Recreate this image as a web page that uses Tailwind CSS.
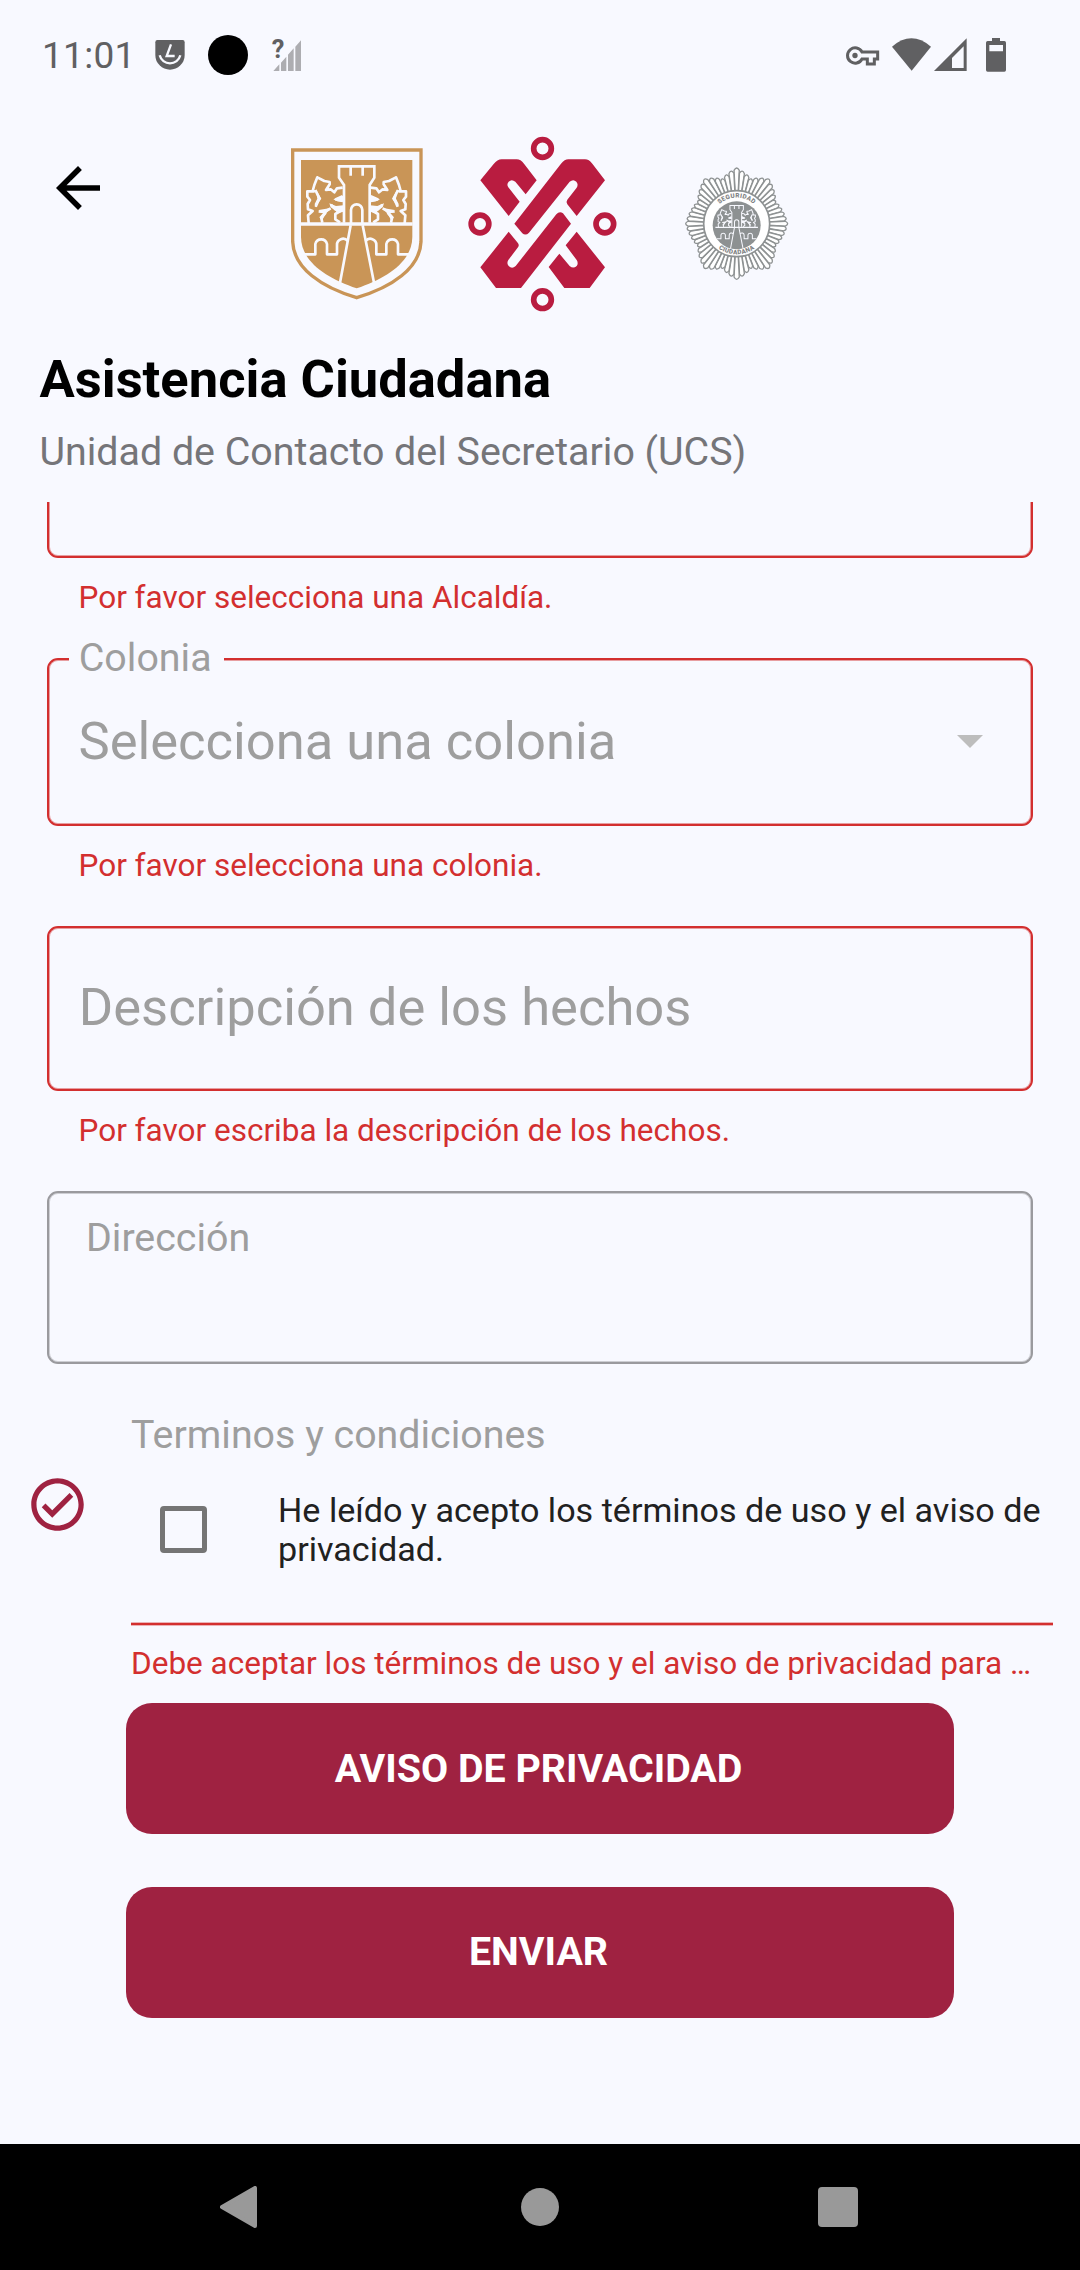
<!DOCTYPE html>
<html lang="es">
<head>
<meta charset="utf-8">
<title>Asistencia Ciudadana</title>
<script src="https://cdn.jsdelivr.net/npm/@tailwindcss/browser@4"></script>
</head>
<body class="w-[1080px] h-[2270px] overflow-hidden bg-[#f8f9ff] font-['Roboto',sans-serif] flex flex-col">

<!-- Status bar -->
<div class="h-[110px] flex shrink-0 items-start text-[#606062]">
  <div class="pl-[42px] pt-[31px] w-[155px] text-[37px] leading-[50px] tracking-[0.3px] whitespace-nowrap">11:01</div>
  <svg class="mt-[39px] w-8 h-8 shrink-0" viewBox="465 117 96 96">
    <path fill="currentColor" d="M472 120H548Q554 120 554 127V165A44 44 0 0 1 466 165V127Q466 120 472 120Z"/>
    <path fill="none" stroke="#f8f9ff" stroke-width="7" d="M513 133L500 168H524M479 166A32 32 0 0 0 541 166"/>
  </svg>
  <div class="ml-[21px] mt-[35px] size-10 rounded-full bg-black"></div>
  <svg class="ml-[14px] mt-[24px] w-[50px] h-[60px] shrink-0" viewBox="786 72 150 180">
    <path fill="#adadb1" d="M820 213L838 193V213ZM843 213V188L859 170V213ZM864 213V164L881 145V213ZM886 213V140L903 121V213Z"/>
    <text x="815" y="173" font-size="76" font-weight="700" fill="#606062" font-family="Roboto">?</text>
  </svg>
  <svg class="ml-auto mr-[60px] mt-[30px] w-[180px] h-[50px] text-[#606062]" viewBox="120 90 540 150">
    <g fill="none" stroke="currentColor" stroke-width="9">
      <path d="M186 156A23 23 0 1 0 186 177H202V192H223V177H233V156Z"/>
    </g>
    <g fill="currentColor">
      <circle cx="165" cy="166.500" r="8"/>
      <path d="M276 140Q334 90 393 140L335 212Z"/>
      <path fill-rule="evenodd" d="M402 213L500 115V213ZM456 174V204H491V139Z"/>
      <path fill-rule="evenodd" d="M576 114H600V123H613Q618 123 618 128V210Q618 215 613 215H563Q558 215 558 210V128Q558 123 563 123H576ZM568 135V154H609V135Z"/>
    </g>
  </svg>
</div>

<!-- Header with logos -->
<header class="h-[230px] flex shrink-0 items-start">
  <svg class="ml-[45px] mt-[45px] size-[66px] shrink-0" viewBox="0 0 24 24"><path d="M20 11H7.830l5.590-5.590L12 4l-8 8 8 8 1.410-1.410L7.830 13H20v-2z"/></svg>
  <svg class="ml-[169px] mt-5 w-[160px] h-[180px] shrink-0" viewBox="0 0 480 540">
    <path fill="none" stroke="#c99557" stroke-width="10" d="M38 60H423V335C420 415 335 472 230 503C125 472 41 415 38 335Z"/>
    <path fill="#c99557" d="M63 90H397V320C397 395 320 445 230 475C140 445 63 395 63 320Z"/>
    <g id="castle" fill="none" stroke="#f8f9ff" stroke-width="8">
      <path stroke-width="10" d="M62 282H398"/>
      <path d="M192 278V165L177 143V109H283V143L269 165V278M212 109V137M248 109V137M213 280V240A17 17 0 0 1 247 240V280M212 286L180 458M248 286L282 458"/>
      <g id="half" stroke-linejoin="round">
        <path d="M72 373H106V342A18 18 0 0 1 141 342V373H171V345A18 18 0 0 1 203 333"/>
        <path d="M98 183L103 165L112 142L133 153L149 156L149 163L138 180L152 178L163 187L171 175L188 173M104 184H82V200L90 210L83 222L84 238L98 243L84 256L86 279M106 180L118 205L107 230M188 199L168 208L188 213M188 240L166 238L153 224M186 240L166 252V268L180 277M152 235L133 246L116 244M137 248L124 264L127 278"/>
        <path stroke="none" fill="#f8f9ff" d="M108 178L124 206L106 232L104 222L112 206ZM148 220L168 228L190 226V245L172 250L165 240L152 232ZM160 208L190 197V216L172 214ZM116 240L152 234L135 254L126 272L118 262L130 248Z"/>
      </g>
      <use href="#half" transform="translate(460 0) scale(-1 1)"/>
    </g>
  </svg>
  <svg class="ml-5 mt-5 w-[165px] h-[185px] shrink-0" viewBox="0 0 495 555">
    <g fill="#b91c40">
      <path d="M61 151L101 102Q112 88 125 88H170Q182 88 192 101L230 151L197 193L166 155Q155 146 146 155Q139 163 145 172L179 215L146 258Z"/>
      <path d="M303 101Q314 88 325 88H375Q387 88 397 101L435 151L350 258L322 223Q317 216 322 209L350 173Q356 163 349 155Q340 146 329 155L207 308Q197 318 187 310L163 281Z"/>
      <path d="M333 281L183 474H108L61 412L146 305L173 338Q179 345 174 352L145 390Q139 400 146 408Q156 418 167 408L289 253Q298 243 309 250Z"/>
      <path d="M298 371L266 411L313 474H389L435 412L350 305L317 346L350 390Q356 400 350 408Q340 417 329 408Z"/>
    </g>
    <g fill="none" stroke="#b91c40" stroke-width="17">
      <circle cx="247.500" cy="55.500" r="26.500"/><circle cx="60" cy="282" r="26.500"/><circle cx="434.500" cy="282" r="26.500"/><circle cx="247.500" cy="509" r="26.500"/>
    </g>
  </svg>
  <svg class="ml-[50px] mt-[45px] w-[125px] h-[135px] shrink-0" viewBox="0 0 375 405">
    <g id="rays" fill="#fff" stroke="#8d9192" stroke-width="4" stroke-linejoin="round"></g>
    <circle cx="185" cy="206" r="99" fill="#fff" stroke="#8d9192" stroke-width="5"/>
    <circle cx="185" cy="211" r="72" fill="#8d9192"/>
    <clipPath id="disc"><circle cx="185" cy="211" r="72"/></clipPath>
    <g clip-path="url(#disc)"><use href="#castle" transform="translate(97.600 109.800) scale(.38)"/></g>
    <path id="arcTop" fill="none" d="M107 206A78 78 0 0 1 263 206"/>
    <path id="arcBottom" fill="none" d="M93 206A92 92 0 0 0 277 206"/>
    <g font-family="Roboto" font-weight="900" font-size="19" fill="#7f8384" text-anchor="middle">
      <text letter-spacing="1"><textPath href="#arcTop" startOffset="50%">SEGURIDAD</textPath></text>
      <text letter-spacing="1"><textPath href="#arcBottom" startOffset="50%">CIUDADANA</textPath></text>
    </g>
  </svg>
</header>

<h1 class="h-[78px] shrink-0 pl-[39.5px] text-[52.5px] leading-[78px] font-bold text-black whitespace-nowrap">Asistencia Ciudadana</h1>
<p class="h-[84px] shrink-0 pl-[39.5px] text-[39.375px] leading-[68px] text-[#757579] whitespace-nowrap">Unidad de Contacto del Secretario (UCS)</p>

<!-- Form -->
<main class="flex flex-col shrink-0 h-[1642px] overflow-hidden">
  <div class="mx-[47px] h-20 -mt-6 shrink-0 border-2 border-[#d32f2f] rounded-[11px] shadow-[inset_0_0_0_1px_rgba(211,47,47,0.45)]"></div>
  <p class="h-[78px] mb-[22px] shrink-0 pl-[78.5px] text-[31.5px] leading-[80px] text-[#d32f2f]">Por favor selecciona una Alcaldía.</p>

  <div class="relative mx-[47px] h-[168px] shrink-0 border-2 border-[#d32f2f] rounded-[11px] shadow-[inset_0_0_0_1px_rgba(211,47,47,0.45)] flex items-center justify-between pl-[29.5px] pr-[48px] pb-[2px]">
    <span class="absolute left-5 -top-[35px] w-[155px] pl-[9.75px] bg-[#f8f9ff] text-[39.375px] leading-[66px] text-[#9e9e9e]">Colonia</span>
    <span class="text-[52.5px] leading-[62px] text-[#9e9e9e]">Selecciona una colonia</span>
    <svg class="w-[26px] h-[13px]" viewBox="0 0 26 13"><path fill="#bdbdbd" d="M0 0H26L13 13Z"/></svg>
  </div>
  <p class="h-[78px] mb-[22px] shrink-0 pl-[78.5px] text-[31.5px] leading-[80px] text-[#d32f2f]">Por favor selecciona una colonia.</p>

  <div class="mx-[47px] h-[165px] shrink-0 border-2 border-[#d32f2f] rounded-[11px] shadow-[inset_0_0_0_1px_rgba(211,47,47,0.45)] flex items-center pl-[29.75px] pb-[3px]">
    <span class="text-[52.5px] leading-[62px] text-[#9e9e9e]">Descripción de los hechos</span>
  </div>
  <p class="h-[78px] mb-[22px] shrink-0 pl-[78.5px] text-[31.5px] leading-[80px] text-[#d32f2f]">Por favor escriba la descripción de los hechos.</p>

  <div class="mx-[47px] h-[173px] shrink-0 border-2 border-[#9a9a9e] rounded-[11px] shadow-[inset_0_0_0_1px_rgba(154,154,158,0.45)] pl-[37px] pt-[22px]">
    <span class="block text-[39.375px] leading-[46px] text-[#9e9e9e]">Dirección</span>
  </div>

  <div class="flex shrink-0 h-[337px] mb-[2px]">
    <svg class="ml-[26px] mt-[109px] mr-[42px] size-[63px] shrink-0" viewBox="0 0 24 24"><path fill="#9f2241" d="M12 2C6.480 2 2 6.480 2 12s4.480 10 10 10 10-4.480 10-10S17.520 2 12 2zm0 18c-4.410 0-8-3.590-8-8s3.590-8 8-8 8 3.590 8 8-3.590 8-8 8zm4.590-12.420L10 14.170l-2.590-2.580L6 13l4 4 8-8z"/></svg>
    <div class="w-[922px] flex flex-col">
      <div class="mt-12 shrink-0 text-[39.375px] leading-[46px] text-[#9e9e9e]">Terminos y condiciones</div>
      <div class="h-[143px] mb-[21px] shrink-0 flex items-center">
        <div class="ml-[29px] size-[47px] border-5 border-[#757575] rounded-[4px] shrink-0"></div>
        <p class="ml-[71px] text-[34.125px] leading-[39px] text-[#212121] whitespace-nowrap">He leído y acepto los términos de uso y el aviso de<br>privacidad.</p>
      </div>
      <div class="h-1 border-y border-[#d32f2f]/35 bg-[#d32f2f] bg-clip-padding shrink-0"></div>
      <p class="shrink-0 text-[31.5px] leading-[76px] text-[#d32f2f] whitespace-nowrap">Debe aceptar los términos de uso y el aviso de privacidad para …</p>
    </div>
  </div>

  <button class="mx-[126px] h-[131px] pr-[3px] mb-[53px] shrink-0 rounded-[26px] bg-[#9f2241] text-white font-bold text-[39.375px]">AVISO DE PRIVACIDAD</button>
  <button class="mx-[126px] h-[131px] pr-[3px] pb-[2px] shrink-0 rounded-[26px] bg-[#9f2241] text-white font-bold text-[39.375px]">ENVIAR</button>
</main>

<!-- System navigation -->
<nav class="h-[126px] shrink-0 bg-black flex items-center text-[#999]">
  <svg class="ml-[220px] w-[37px] h-[42px]" viewBox="0 0 37 42"><path fill="currentColor" stroke="currentColor" stroke-width="4" stroke-linejoin="round" d="M2 21L35 2V40Z"/></svg>
  <div class="ml-[264px] size-[38px] rounded-full bg-[#999]"></div>
  <div class="ml-[259px] size-10 rounded-[4px] bg-[#999]"></div>
</nav>

<script>
  // Badge rays: tapered wedges whose length follows an eight-pointed outline
  const peaks = [[0,164],[18,138],[36,162],[60,132],[90,150],[120,132],[144,162],[162,138],[180,164]];
  const radius = a => {
    a = a > 180 ? 360 - a : a;
    for (let i = 1; i < peaks.length; i++) {
      const [a0, r0] = peaks[i-1], [a1, r1] = peaks[i];
      if (a <= a1) return r0 + (r1 - r0) * (a - a0) / (a1 - a0);
    }
  };
  let wedges = '';
  for (let a = 0; a < 360; a += 6) {
    const r = radius(a);
    wedges += `<path transform="rotate(${a} 185 206)" d="M180.500 ${206 - 95}L${185 - r * 0.048} ${210 - r}Q185 ${196 - r} ${185 + r * 0.048} ${210 - r}L189.500 ${206 - 95}Z"/>`;
  }
  document.getElementById('rays').innerHTML = wedges;
</script>
</body>
</html>
